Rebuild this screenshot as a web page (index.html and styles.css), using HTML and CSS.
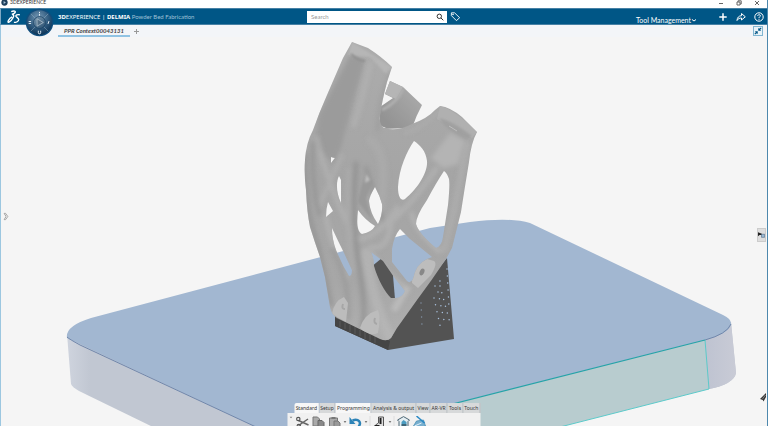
FILE: index.html
```html
<!DOCTYPE html>
<html lang="en">
<head>
<meta charset="utf-8">
<title>3DEXPERIENCE</title>
<link rel="stylesheet" href="styles.css">
</head>
<body>
<div class="app">
  <div class="titlebar">
    <svg class="app-icon" viewBox="0 0 8 8" aria-hidden="true"><circle cx="4" cy="4" r="3.6" fill="#1d3f5c"/><path d="M3 2.4 5.6 4 3 5.6z" fill="#a9c4d8"/></svg>
    <span class="app-name">3DEXPERIENCE</span>
    <div class="window-buttons">
      <button aria-label="Minimize"><svg viewBox="0 0 6 6"><path d="M1 3.5h4"/></svg></button>
      <button aria-label="Restore"><svg viewBox="0 0 6 6"><path d="M1 2h3v3H1zM2 2V.8h3.2V4H4"/></svg></button>
      <button aria-label="Close"><svg viewBox="0 0 6 6"><path d="M1 1l4 4M5 1 1 5"/></svg></button>
    </div>
  </div>

  <header class="topbar">
    <svg class="ds-logo" viewBox="0 0 14 14" aria-hidden="true">
      <path d="M4.2 1.6c2-.9 4.2-.9 4.1.3-.1 1-1.800 2-3.500 2.500M5 4.500c1.800 0 2.200 1.200 1.200 3C5.200 9.500 3.500 11.300 2 12.200c-1.100.5-1.300-.3-.6-1.700C2.200 8.900 3.500 7.500 5.200 6.800"/>
      <path d="M12.800 4.800c-2.400-.5-4.500.4-3.800 1.600.5.800 2.700 1.700 2.700 3 0 1.700-2.400 3-4.800 3"/>
    </svg>
    <div class="compass">
      <svg viewBox="0 0 30 30" role="img" aria-label="Compass">
        <defs>
          <radialGradient id="ring" cx=".45" cy=".3" r=".75"><stop offset="0" stop-color="#7699b5"/><stop offset=".55" stop-color="#315c80"/><stop offset="1" stop-color="#082e50"/></radialGradient>
          <linearGradient id="hub" x2=".7" y2="1"><stop stop-color="#7e9bb2"/><stop offset="1" stop-color="#315777"/></linearGradient>
        </defs>
        <circle cx="15" cy="15" r="14.300" fill="#104d7c"/>
        <circle cx="15" cy="15" r="12.800" fill="url(#ring)"/>
        <path d="M6 6l5 5M24 6l-5 5M6 24l5-5M24 24l-5-5" stroke="#9bb5c9" stroke-width=".5"/>
        <circle cx="15" cy="15" r="6.200" fill="url(#hub)" stroke="#163e60" stroke-width=".7"/>
        <path d="M12.500 11.200 19 15l-6.500 3.800z" fill="#526f87" stroke="#bdcdd8" stroke-width=".7"/>
        <g stroke="#e8f1f7" stroke-width="1" fill="none"><path d="M15 4v1.200M15 6v2M3.800 14h2.500M3.800 16h2.500M24.800 13.500l-1 3M13.800 23.500v2a1.200 1.200 0 0 0 2.400 0v-2"/></g>
      </svg>
    </div>
    <h1 class="brand"><b>3D</b>EXPERIENCE <i>|</i> <strong>DELMIA</strong> <small>Powder Bed Fabrication</small></h1>
    <form class="search">
      <input type="search" placeholder="Search" aria-label="Search">
      <button type="button" aria-label="Run search"><svg viewBox="0 0 8 8"><circle cx="3.300" cy="3.300" r="2.200"/><path d="m5 5 2.300 2.300"/></svg></button>
    </form>
    <button class="tag" aria-label="Tags"><svg viewBox="0 0 12 12"><path d="M1.500 2v3L7 10.500l3.500-3.200L5 2z"/><circle cx="3.300" cy="3.700" r=".5"/></svg></button>
    <div class="account">
      <button class="role">Tool Management <svg viewBox="0 0 6 6"><path d="M1 2.500 3 4l2-1.500"/></svg></button>
      <button class="action" aria-label="Add"><svg viewBox="0 0 10 10"><path d="M5 1.300v7.400M1.300 5h7.400" stroke-width="1.500"/></svg></button>
      <button class="action" aria-label="Share"><svg viewBox="0 0 10 10"><path d="M1 8.500C1.200 5.500 2.800 3.800 5.500 3.700V1.500L9.300 4.800 5.500 8V6C3.500 5.900 2 6.800 1 8.500z"/></svg></button>
      <button class="action" aria-label="Help"><svg viewBox="0 0 10 10"><circle cx="5" cy="5" r="4.200"/><path d="M3.700 4c0-1.800 2.800-1.700 2.700-.1C6.300 4.800 5 4.800 5 6M5 6.800v1"/></svg></button>
    </div>
  </header>

  <nav class="tabstrip">
    <a class="doc-tab" href="#context">PPR Context00043131</a>
    <button class="new-tab" aria-label="New tab"><svg viewBox="0 0 5 5"><path d="M2.500 0v5M0 2.500h5"/></svg></button>
    <button class="collapse" aria-label="Exit full view"><svg viewBox="0 0 10 10"><path d="M9 1 6 4M6 1.500V4h2.500M1 9l3-3M1.500 6H4v2.500"/></svg></button>
  </nav>

  <main class="viewport">
    <svg class="scene" viewBox="0 37 768 389" preserveAspectRatio="xMidYMid slice" role="img" aria-label="Lattice bracket on a build plate">
      <defs>
        <linearGradient id="side" x1="67" x2="90" y1="0" y2="0" gradientUnits="userSpaceOnUse"><stop stop-color="#cfd4de"/><stop offset="1" stop-color="#c1c7d2"/></linearGradient>
        <linearGradient id="corner"><stop stop-color="#bec3d1"/><stop offset="1" stop-color="#c9cbd6"/></linearGradient>
        <linearGradient id="metal" x1="0" y1="42" x2="0" y2="342" gradientUnits="userSpaceOnUse"><stop stop-color="#acacac"/><stop offset=".45" stop-color="#a5a5a5"/><stop offset=".8" stop-color="#a7a7a7"/><stop offset="1" stop-color="#b0b0b0"/></linearGradient>
        <linearGradient id="arm" x1="385" y1="120" x2="415" y2="92" gradientUnits="userSpaceOnUse"><stop stop-color="#939393"/><stop offset="1" stop-color="#a9a9a9"/></linearGradient>
        <filter id="soft" x="-30%" y="-30%" width="160%" height="160%"><feGaussianBlur stdDeviation="2"/></filter>
        <filter id="fine" x="-30%" y="-30%" width="160%" height="160%"><feGaussianBlur stdDeviation="1"/></filter>
        <path id="body" d="M352 42 368 48Q382 57 392 67L387 82Q382 101 380 116Q379 125 384 128Q397 132 412 124Q428 118 435 110L440 106Q450 107 462 117L477 132Q471 143 469 162Q465 186 461 212L452 248 446 259Q432 280 417 300L397 328 391 338Q387 342 380 339L337 318Q331 314 330 307L325 277 320 257Q315 243 310 227Q307 213 306 190Q304 175 305 160Q306 143 313 130Q319 113 327 95L343 58z
          M331 157 335 158 331 163z
          M339 176C336 182 336 192 341 203V180z
          M328 202 333 211 326 217Q326 209 328 202z
          M332 228Q332 239 336 250 342 265 349 276 352 276 352 270L344 253Q338 241 332 228z
          M358 210Q365 220 375 226 372 232 362 234C356 231 357 220 358 210z
          M375 187Q370 195 369 201 370 213 378 224 383 214 382 204 380 196 375 187z
          M414 141C407 151 399 168 398 187 398 199 402 201 405 199 416 190 428 174 427 161 426 151 420 145 414 141z
          M444 171Q436 183 427 200 416 216 416 224 419 234 436 248 442 246 443 237L448 205Q450 185 449 179 447 173 444 171z
          M400 229Q394 236 392 249V262L407 281Q410 284 413 279 416 264 427 259L432 257 410 239z
          M371 252Q374 258 374 266C378 280 385 292 391 298H396Q402 298 405 291L394 277 383 261z"/>
        <clipPath id="body-clip"><use href="#body" clip-rule="evenodd"/></clipPath>
      </defs>

      <path d="M67 334 71 384Q72 387 79 391L155 428H480L709 389Q734 384 736 373L731 322z" fill="url(#side)"/>
      <path d="M705 340 731 323 736 373Q734 384 709 389z" fill="url(#corner)"/>
      <path d="M258 428 67 338Q65 326 91 318L430 228 470 222Q510 217 530 223L723 315Q732 319 731 325 728 334 705 340L420 412 350 428z" fill="#a2b7d1"/>
      <path d="M67 337Q69 339 80 345L256 427M705 340Q727 334 731 324" fill="none" stroke="#7187ab" stroke-width="1"/>
      <path d="M370 425 705 340 709 389 560 427H370z" fill="#b8cccf"/>
      <path d="M705 340 709 389 560 427" fill="none" stroke="#5ccaca" stroke-width="1"/>
      <path d="M370 425 705 340" fill="none" stroke="#25a3a8" stroke-width="1.200"/>

      <path d="M371 267 382 258 391 252 395 299 380 300z" fill="#555"/>
      <path d="M335 314V326L388 350 454 339 447 258 415 298 394 325 380 335z" fill="#535353"/>
      <path d="M335 318V326L388 350 390 341z" fill="#454545"/>
      <path d="M340 321v6M345 323v6M350 325v7M355 327v7M360 330v6M365 332v7M370 334v7M375 336v7" stroke="#5b5b5b" stroke-width="1"/>
      <g fill="none" stroke="#a9c0dc" stroke-width="1.500" stroke-linecap="round" stroke-dasharray="0 7">
        <path d="M435 286 443 278M434 298 441 330M438 292 445 325M440 286 450 323M447 269 449 308"/>
        <path d="M421 303 422 326" stroke="#8292a5"/>
      </g>

      <path d="M390 81 403 87 422 105Q416 116 412 128L380 129V107L393 98 385 94z" fill="url(#arm)"/>
      <path d="M390 81 403 87 396 99 385 94z" fill="#b5b5b5"/>
      <path d="M403 89Q397 103 382 110" fill="none" stroke="#b0b0b0" stroke-width="3" filter="url(#fine)"/>
      <path d="M381 126 386 128 381 128z" fill="#f2f2f2"/>
      <use href="#body" fill="url(#metal)" fill-rule="evenodd"/>
      <g clip-path="url(#body-clip)">
        <path d="M350 55 365 60 355 95 341 147 334 164 315 146 319 115z" fill="#9b9b9b" filter="url(#soft)"/>
        <path d="M352 42 392 67 386 74 370 57 348 55z" fill="#b6b6b6" filter="url(#fine)"/>
        <path d="M351 54Q358 61 365 61" fill="none" stroke="#8e8e8e" stroke-width="2" filter="url(#fine)"/>
        <g class="relief" fill="none" filter="url(#soft)" stroke-linecap="round">
          <path d="M370 64Q363 96 354 125" stroke="#b2b2b2" stroke-width="6"/>
          <path d="M390 74Q378 105 378 130" stroke="#999" stroke-width="3"/>
          <path d="M305 155Q303 205 318 246L331 304" stroke="#929292" stroke-width="5"/>
          <path d="M317 138Q322 165 340 207L353 237" stroke="#b4b4b4" stroke-width="5"/>
          <path d="M342 155 317 211" stroke="#b2b2b2" stroke-width="4"/>
          <path d="M313 143Q311 182 319 214" stroke="#919191" stroke-width="4"/>
          <path d="M326 217Q331 244 347 277" stroke="#b5b5b5" stroke-width="5"/>
          <path d="M356 164Q351 215 359 265T362 326" stroke="#8e8e8e" stroke-width="5"/>
          <path d="M349 170Q346 230 353 270" stroke="#adadad" stroke-width="5"/>
          <path d="M366 168 384 224" stroke="#919191" stroke-width="4"/>
          <path d="M371 247Q389 251 391 221 406 211 436 169" stroke="#b5b5b5" stroke-width="5"/>
          <path d="M361 239Q381 234 397 208" stroke="#b4b4b4" stroke-width="6"/>
          <path d="M412 214Q414 229 439 251" stroke="#b7b7b7" stroke-width="5"/>
          <path d="M467 144 454 210 444 250" stroke="#b0b0b0" stroke-width="6"/>
          <path d="M438 112Q420 130 405 133" stroke="#b0b0b0" stroke-width="3"/>
          <path d="M370 140Q390 154 380 207" stroke="#acacac" stroke-width="9"/>
          <path d="M372 254Q391 280 409 289" stroke="#bcbcbc" stroke-width="4"/>
          <path d="M366 253Q374 307 390 337" stroke="#b8b8b8" stroke-width="10"/>
          <path d="M333 250Q349 277 348 318" stroke="#999" stroke-width="5"/>
          <path d="M406 290 395 308" stroke="#c2c2c2" stroke-width="7"/>
        </g>
        <path d="M440 106Q454 109 477 132L472 138 437 119z" fill="#b0b0b0"/>
        <path d="M439 118Q453 121 472 136L465 140Q445 129 439 118z" fill="#a0a0a0" filter="url(#fine)"/>
        <path d="M449 126 457 131" stroke="#bdbdbd" stroke-width="1"/>
        <path d="M450 133 465 141 458 164 443 168 431 158z" fill="#b4b4b4" filter="url(#soft)"/>
        <path d="M412 283Q412 266 427 259L434 261Q438 263 431 275L418 288z" fill="#bdbdbd"/>
        <path d="M332 314Q334 301 344 297L348 303 346 322z" fill="#bcbcbc"/>
        <path d="M360 328Q364 314 378 310 381 317 378 333 368 337 360 328z" fill="#bcbcbc"/>
        <path d="M343 304Q341 309 345 309M375 318Q373 323 377 324" stroke="#a6a6a6" stroke-width="2" fill="none"/>
        <ellipse cx="422" cy="272" rx="2.200" ry="3.500" transform="rotate(25 422 272)" fill="#888"/>
        <path d="M366 173Q361 185 358 202L372 220 366 198 373 182z" fill="#999" filter="url(#fine)"/>
        <path d="M366 174 370 180 365 183z" fill="#c0c0c0" filter="url(#fine)"/>
      </g>
    </svg>

    <button class="tree-handle" aria-label="Show tree"><svg viewBox="0 0 6 10"><path d="M1 1.500h1.500L5 5 2.500 8.500H1L3 5z"/></svg></button>
    <button class="side-handle" aria-label="Show panel"><svg viewBox="0 0 9 13"><path d="M0 3v5l2-1.500h3V5z" fill="#222"/><path d="M4.500 5.500h4v4h-4z" fill="#9ab9d5" stroke="#46607a" stroke-width=".7"/></svg></button>
    <svg class="pointer" viewBox="0 0 6 9" aria-hidden="true"><path d="M6 0V4L3.500 8.500 2.800 7 0 6z" fill="#333"/><path d="m5.500 2-3 4" stroke="#ddd" stroke-width=".5"/></svg>

    <section class="actionbar">
      <div class="section-tabs">
        <button class="on first">Standard</button><button>Setup</button><button class="on">Programming</button><button>Analysis &amp; output</button><button>View</button><button>AR-VR</button><button>Tools</button><button>Touch</button>
      </div>
      <div class="tools">
        <button class="more" aria-label="Bar options"><svg viewBox="0 0 4 4"><path d="M0 1h4L2 3z" fill="#888"/></svg></button>
        <button aria-label="Cut"><svg viewBox="0 0 14 12"><path d="M3 4.500 13 9M3 9.500 12.500 3" stroke="#666" stroke-width="1.500"/><circle cx="2.800" cy="3" r="1.700" fill="none" stroke="#555" stroke-width="1.200"/><circle cx="3.300" cy="10" r="1.700" fill="none" stroke="#555" stroke-width="1.200"/></svg></button>
        <button aria-label="Copy"><svg viewBox="0 0 14 12"><path d="M1.500 1h4.500l2 2v7H1.500z" fill="#aaa" stroke="#777"/><path d="M6.500 4.500h4l2 2V12h-6z" fill="#888" stroke="#666"/></svg></button>
        <button aria-label="Paste"><svg viewBox="0 0 14 12"><path d="M2 2h8v9H2z" fill="#aaa" stroke="#777"/><path d="M4 1h4v2H4z" fill="#777"/><path d="M6.500 5h4l2 2v5h-6z" fill="#999" stroke="#777"/></svg></button>
        <svg class="caret" viewBox="0 0 4 4"><path d="M0 1h4L2 3z" fill="#555"/></svg>
        <button aria-label="Undo"><svg viewBox="0 0 14 12"><path d="M4 4.500C10 2.500 13.500 6 10 11" fill="none" stroke="#2d83b7" stroke-width="2.500"/><path d="M1 1v7h6z" fill="#2d83b7"/></svg></button>
        <svg class="caret" viewBox="0 0 4 4"><path d="M0 1h4L2 3z" fill="#555"/></svg>
        <i class="rule"></i>
        <button aria-label="Part"><svg viewBox="0 0 14 12"><path d="M3 9 6 7V1h5v10H9" fill="#ddd" stroke="#555"/><path d="M8 2v6M2 10h5" stroke="#222" stroke-width="2"/></svg></button>
        <svg class="caret" viewBox="0 0 4 4"><path d="M0 1h4L2 3z" fill="#555"/></svg>
        <i class="rule"></i>
        <button aria-label="Build"><svg viewBox="0 0 14 12"><path d="M1 4 7 .6 13 4l-1.500 1.500V11.500h-9v-6z" fill="#e4eef2" stroke="#4d6675"/><path d="m5 6 2-2 3 2v4H5z" fill="#4b9cc1"/><path d="M5 9h5" stroke="#333"/></svg></button>
        <button aria-label="Slice"><svg viewBox="0 0 14 12"><path d="M1 10 4 5 11 4l2 6-6 2z" fill="#78afcf" stroke="#3e86ad" stroke-width=".7"/><path d="m4 0 8 7" stroke="#2788c5" stroke-width="1.500"/><path d="m2 10 7-3" stroke="#e7f3fa"/></svg></button>
      </div>
    </section>
  </main>
</div>
</body>
</html>
```
FILE: styles.css
```css
* { box-sizing: border-box; }

body {
  margin: 0;
  background: #f5f5f5;
  color: #333;
  font: 6px/8px "Noto Sans", "Open Sans", sans-serif;
}

button {
  margin: 0;
  padding: 0;
  border: 0;
  background: none;
  color: inherit;
  font: inherit;
}

svg { display: block; }

.app {
  display: flex;
  flex-direction: column;
  height: 100vh;
  overflow: hidden;
  border-right: 1px solid #4d88ad;
}

/* Window title */
.titlebar {
  display: flex;
  align-items: center;
  gap: 2px;
  height: 8px;
  padding: 0 7px 3px 1px;
  background: #fff;
}
.app-icon { width: 7px; height: 7px; }
.app-name { font: 5px/5px Lato, sans-serif; }
.window-buttons { display: flex; gap: 12px; margin-left: auto; }
.window-buttons svg { width: 6px; height: 6px; fill: none; stroke: #666; stroke-width: 1; }

/* Main bar */
.topbar {
  position: relative;
  display: flex;
  align-items: center;
  height: 17px;
  padding-left: 6px;
  padding-right: 3px;
  border-top: 1px solid #4781a5;
  border-bottom: 1px solid #4781a5;
  border-left: 1px solid #7fa9c4;
  background: #005686;
  color: #fff;
}
.topbar svg { fill: none; stroke: #fff; stroke-width: 1; }
.ds-logo { width: 14px; height: 14px; }
.topbar .ds-logo { stroke-width: 1.4; }
.compass { position: absolute; left: 24px; top: -1px; width: 29px; z-index: 2; }
.topbar .compass svg { stroke: none; }
.brand {
  flex: 0 0 249px;
  margin: 0 0 0 37px;
  font: 400 6px/10px "Noto Sans", sans-serif;
  white-space: nowrap;
}
.brand i { font-style: normal; }
.brand b, .brand strong { font-weight: 700; }
.brand small { font: 6px/10px Lato, sans-serif; color: #9fc1d6; }
.search {
  display: flex;
  align-items: center;
  flex: 0 1 140px;
  height: 12px;
  padding-right: 3px;
  background: #fff;
}
.search input {
  flex: 1;
  min-width: 0;
  height: 12px;
  padding: 0 4px;
  border: 0;
  outline: 0;
  background: none;
  color: #333;
  font: 6px/12px Lato, sans-serif;
}
.search input::placeholder { color: #999; }
.search svg { width: 8px; height: 8px; stroke: #333; }
.tag { margin-left: 3px; }
.tag svg { width: 11px; height: 11px; }
.account { display: flex; align-items: center; gap: 8px; margin-left: auto; }
.role { display: flex; align-items: center; padding-top: 6px; margin-right: 13px; font: 7px/8px Lato, sans-serif; }
.role svg { width: 6px; height: 6px; }
.action svg { width: 10px; height: 10px; }

/* Document tabs */
.tabstrip {
  display: flex;
  align-items: center;
  height: 12px;
  padding: 0 4px 0 57px;
  border-left: 1px solid #9cc7e0;
  background: #f3f5f8;
}
.doc-tab {
  height: 12px;
  padding: 0 6px;
  border-bottom: 2px solid #90c3e3;
  color: #444;
  font: italic 700 6px/11px Lato, sans-serif;
  text-decoration: none;
}
.new-tab { margin-left: 4px; }
.new-tab svg { width: 5px; height: 5px; stroke: #999; }
.collapse { margin-left: auto; border: 1px solid #82b6d1; background: #eaf3f8; }
.collapse svg { width: 8px; height: 8px; fill: none; stroke: #005686; stroke-width: 1.4; }

/* 3D view */
.viewport {
  position: relative;
  flex: 1;
  min-height: 0;
  border-left: 1px solid #9cc7e0;
}
.scene { position: absolute; inset: 0 0 0 -1px; width: calc(100% + 2px); height: 100%; z-index: -1; }
.tree-handle { position: absolute; left: 2px; top: 45%; }
.tree-handle svg { width: 6px; height: 9px; fill: #fff; stroke: #999; stroke-width: 1; }
.side-handle { position: absolute; right: 1px; top: 49%; border: 1px solid #ccc; background: #dedede; }
.side-handle svg { width: 7px; height: 12px; }
.pointer { position: absolute; right: 1px; bottom: 24px; width: 6px; height: 9px; }
.relief { opacity: .7; }

/* Action bar */
.actionbar { position: absolute; bottom: 0; left: 50%; width: 193px; transform: translateX(-50%); }
.section-tabs { display: flex; height: 10px; margin-left: 7px; }
.section-tabs button {
  flex: 1 0 auto;
  border-right: 1px solid #b5b9bd;
  background: #d7d9da;
  color: #333;
  font-size: 5px;
  white-space: nowrap;
}
.section-tabs .on { background: #f7f7f7; }
.section-tabs .first { border-top-left-radius: 2px; }
.tools { display: flex; align-items: flex-start; height: 13px; padding: 3px 2px 0; gap: 2px; overflow: hidden; background: #f1f1f1; }
.tools button svg { width: 14px; height: 12px; }
.tools .more svg { width: 3px; height: 3px; }
.tools .more { margin-right: 1px; }
.caret { width: 3px; height: 12px; }
.rule { width: 1px; height: 10px; background: #ddd; }
```
